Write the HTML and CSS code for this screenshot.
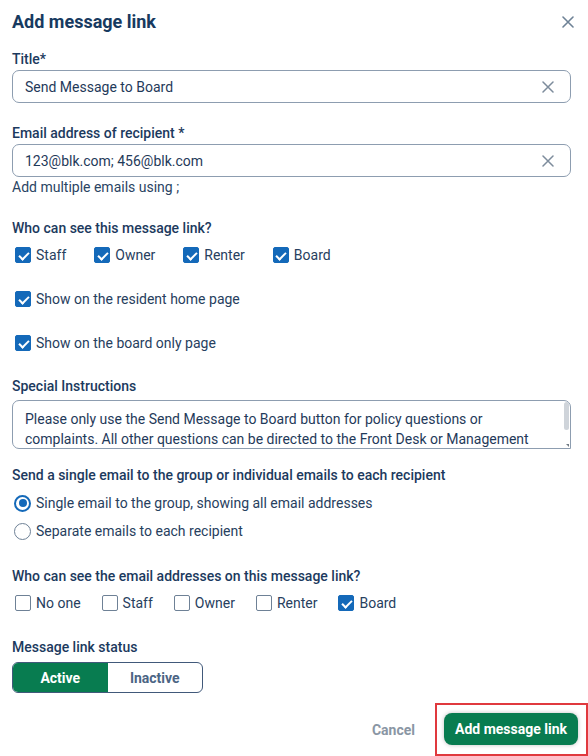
FILE: index.html
```html
<!DOCTYPE html>
<html>
<head>
<meta charset="utf-8">
<link rel="stylesheet" href="styles.css">
</head>
<body>
<div class="dialog">
  <div class="header">
    <h1 class="title">Add message link</h1>
    <button class="close" aria-label="Close">
      <svg width="12" height="12" viewBox="0 0 12 12"><path d="M1 1L11 11M11 1L1 11" stroke="#6e8296" stroke-width="1.6" stroke-linecap="round"/></svg>
    </button>
  </div>

  <label class="label first">Title*</label>
  <div class="input">
    <span class="value">Send Message to Board</span>
    <svg class="clear" width="12" height="12" viewBox="0 0 12 12"><path d="M1 1L11 11M11 1L1 11" stroke="#7d8c9c" stroke-width="1.5" stroke-linecap="round"/></svg>
  </div>

  <label class="label gap20">Email address of recipient *</label>
  <div class="input">
    <span class="value">123@blk.com; 456@blk.com</span>
    <svg class="clear" width="12" height="12" viewBox="0 0 12 12"><path d="M1 1L11 11M11 1L1 11" stroke="#7d8c9c" stroke-width="1.5" stroke-linecap="round"/></svg>
  </div>
  <div class="help">Add multiple emails using ;</div>

  <div class="label gap21">Who can see this message link?</div>
  <div class="row checks wide">
    <span class="check"><span class="box on"></span>Staff</span>
    <span class="check"><span class="box on"></span>Owner</span>
    <span class="check"><span class="box on"></span>Renter</span>
    <span class="check"><span class="box on"></span>Board</span>
  </div>

  <div class="row single"><span class="check"><span class="box on"></span>Show on the resident home page</span></div>
  <div class="row single"><span class="check"><span class="box on"></span>Show on the board only page</span></div>

  <div class="label gap23">Special Instructions</div>
  <div class="ta-wrap">
    <textarea class="textarea" rows="2">Please only use the Send Message to Board button for policy questions or complaints. All other questions can be directed to the Front Desk or Management office directly.</textarea>
    <span class="thumb"></span>
    <span class="grip"></span>
  </div>

  <div class="label gap16">Send a single email to the group or individual emails to each recipient</div>
  <div class="row radio-row"><span class="radio on"></span>Single email to the group, showing all email addresses</div>
  <div class="row radio-row"><span class="radio"></span>Separate emails to each recipient</div>

  <div class="label gap25">Who can see the email addresses on this message link?</div>
  <div class="row checks narrow">
    <span class="check"><span class="box"></span>No one</span>
    <span class="check"><span class="box"></span>Staff</span>
    <span class="check"><span class="box"></span>Owner</span>
    <span class="check"><span class="box"></span>Renter</span>
    <span class="check"><span class="box on"></span>Board</span>
  </div>

  <div class="label gap24">Message link status</div>
  <div class="toggle">
    <span class="seg active">Active</span>
    <span class="seg">Inactive</span>
  </div>

  <div class="footer">
    <button class="cancel">Cancel</button>
    <div class="highlight">
      <button class="primary">Add message link</button>
    </div>
  </div>
</div>
</body>
</html>
```

FILE: styles.css
```css
* { box-sizing: border-box; }
html, body { margin: 0; padding: 0; background: #fff; }
body {
  font-family: Roboto, "Liberation Sans", Arial, sans-serif;
  color: #1c3a5e;
  font-size: 14px;
  line-height: 20px;
  width: 588px;
  height: 756px;
  overflow: hidden;
}
.dialog { padding: 10px 17px 0 12px; }
.header { display: flex; justify-content: space-between; align-items: center; height: 24px; }
.title { margin: 0; font-size: 18px; line-height: 24px; font-weight: 700; color: #173a60; }
.close { border: 0; background: none; padding: 0; width: 14px; height: 14px; display: flex; align-items: center; justify-content: center; margin-right: -4px; }

.label { display: block; font-weight: 500; color: #1c3a5e; height: 20px; }
.first { margin-top: 15px; }
.gap20 { margin-top: 20px; }
.gap21 { margin-top: 21px; }
.gap23 { margin-top: 23px; }
.gap16 { margin-top: 16px; }
.gap25 { margin-top: 25px; }
.gap24 { margin-top: 24px; }

.input {
  margin-top: 1px;
  height: 33px;
  border: 1px solid #8d9db0;
  border-radius: 7px;
  display: flex;
  align-items: center;
  justify-content: space-between;
  padding: 0 16px 0 12px;
}
.value { color: #1f3a5a; }
.clear { flex: none; }
.help { height: 20px; color: #2a4463; }

.row { display: flex; align-items: center; height: 20px; }
.checks { margin-top: 7px; }
.single { margin-top: 24px; }
.check { display: inline-flex; align-items: center; gap: 5px; color: #27405e; }
.wide .check { margin-right: 25px; }
.narrow .check { margin-right: 18px; }
.box {
  width: 16px; height: 16px; margin-left: 3px;
  border: 1.5px solid #6e8196; border-radius: 2px; background: #fff;
  position: relative; flex: none;
}
.box.on { background: #1469b9; border-color: #1469b9; }
.box.on::after {
  content: ""; position: absolute; left: 4.5px; top: 1.5px;
  width: 4px; height: 8px;
  border: solid #fff; border-width: 0 2px 2px 0;
  transform: rotate(45deg);
}

.ta-wrap { position: relative; margin-top: 4px; width: 559px; height: 49px; }
.textarea {
  display: block;
  width: 559px;
  height: 49px;
  border: 1px solid #8d9db0;
  border-radius: 7px 7px 0 7px;
  padding: 8px 14px 0 12px;
  font: inherit;
  color: #1f3a5a;
  line-height: 20px;
  resize: none;
  overflow: hidden;
  outline: none;
}
.thumb {
  position: absolute; right: 2px; top: 2px;
  width: 5px; height: 28px; border-radius: 3px; background: #cfd4da;
}
.grip {
  position: absolute; right: 2px; bottom: 2px;
  width: 0; height: 0;
  border-left: 3px solid transparent; border-top: 3px solid #707a84;
}

.radio-row { margin-top: 8px; gap: 5px; color: #27405e; }
.radio {
  width: 17px; height: 17px; margin-left: 2px; flex: none;
  border: 1.5px solid #6e8196; border-radius: 50%; position: relative;
}
.radio.on { border: 2px solid #1469b9; }
.radio.on::after {
  content: ""; position: absolute; left: 2.5px; top: 2.5px;
  width: 8px; height: 8px; border-radius: 50%; background: #1469b9;
}

.toggle {
  margin-top: 5px;
  display: flex;
  width: 191px;
  height: 31px;
  border: 1px solid #41597a;
  border-radius: 6px;
  overflow: hidden;
}
.seg { flex: 1; display: flex; align-items: center; justify-content: center; font-weight: 700; color: #4c6584; }
.seg.active { background: #087c50; color: #fff; }

.footer { display: flex; justify-content: flex-end; align-items: center; margin-top: 10px; margin-right: -17px; }
.cancel { border: 0; background: none; font: inherit; font-weight: 700; color: #8a96a4; padding: 0; margin-right: 20px; }
.highlight { border: 2px solid #e0393e; padding: 8px 7px 9px 7px; width: 153px; height: 53px; }
.primary {
  border: 0; background: #087c50; color: #fff; font: inherit; font-weight: 700;
  width: 134px; height: 32px; border-radius: 8px; padding: 0;
  box-shadow: 0 0 4px rgba(0,0,0,0.25);
}
```
